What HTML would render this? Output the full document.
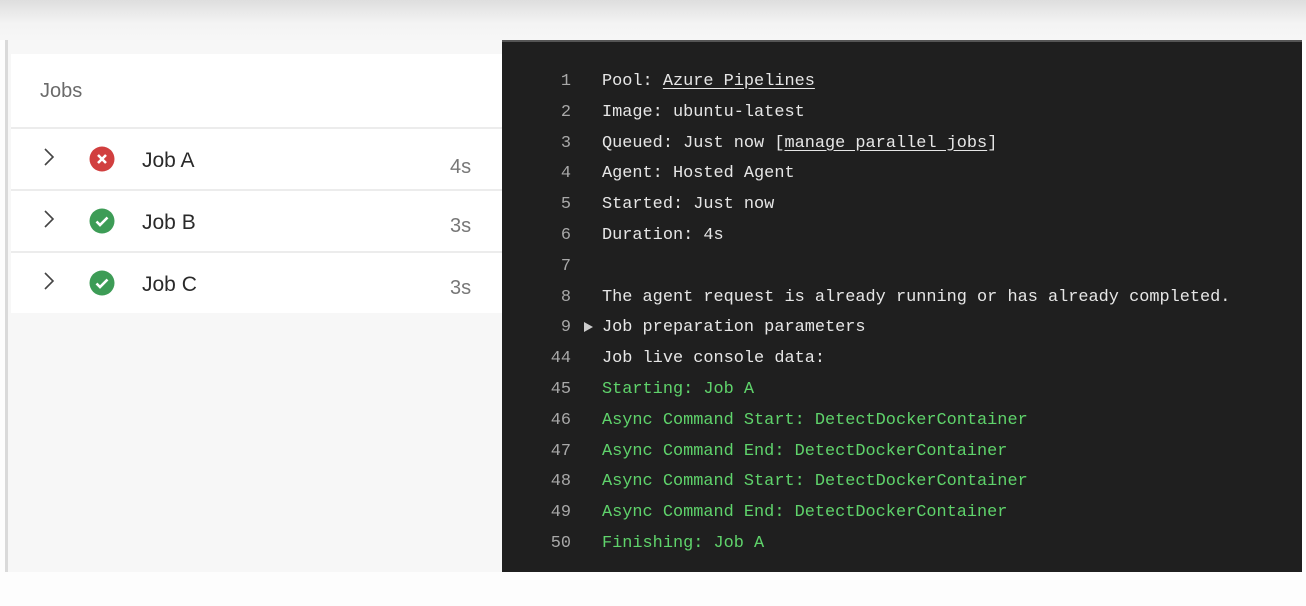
<!DOCTYPE html>
<html><head><style>
body{margin:0;width:1306px;height:606px;background:#fdfdfd;position:relative;overflow:hidden;font-family:"Liberation Sans",sans-serif}
.top{position:absolute;left:0;top:0;width:1306px;height:40px;background:linear-gradient(#dedede,#f4f4f4 60%,#f6f6f6)}
.left{position:absolute;left:5px;top:40px;width:497px;height:532px;background:#f7f7f7;border-left:3px solid #dadada;box-sizing:border-box}
.card{position:absolute;left:3px;top:14px;width:491px;height:259px;background:#fff}
.hdr{position:absolute;left:29px;top:26px;font-size:20px;color:#6a6a6a}
.sep{position:absolute;left:0;width:491px;height:2px;background:#ececec}
.row{position:absolute;left:0;width:491px;height:62px}
.chev{position:absolute;left:32px;top:18px}
.ic{position:absolute;left:78px;top:17px}
.nm{position:absolute;left:131px;top:20px;font-size:21px;color:#2a2a2a}
.dur{position:absolute;left:439px;top:24px;font-size:20px;color:#777}
.con{position:absolute;left:502px;top:40px;width:800px;height:532px;background:#1f1f1f;border-top:2px solid #555;box-sizing:border-box}
.l{position:absolute;left:0;width:800px;height:30.8px;font-family:"Liberation Mono",monospace;font-size:16.9px;line-height:30.8px;white-space:pre;color:#e6e6e6}
.n{position:absolute;right:731px;color:#a8a8a8}
.t{position:absolute;left:100px}
.g{color:#5fd36b}
u{text-underline-offset:3px}
</style></head><body>
<div class="top"></div>
<div class="left"><div class="card">
<div class="hdr">Jobs</div>
<div class="sep" style="top:73px"></div>
<div class="row" style="top:75px">
<svg class="chev" width="12" height="20" viewBox="0 0 12 20"><path d="M2 2l8 8-8 8" fill="none" stroke="#444" stroke-width="1.6"/></svg>
<svg class="ic" width="26" height="26" viewBox="0 0 26 26"><circle cx="13" cy="13" r="12.5" fill="#d13f3f"/><path d="M9 9l8 8M17 9l-8 8" stroke="#fff" stroke-width="2.6"/></svg>
<div class="nm">Job A</div><div class="dur" style="top:27px">4s</div></div>
<div class="sep" style="top:135px"></div>
<div class="row" style="top:137px">
<svg class="chev" width="12" height="20" viewBox="0 0 12 20"><path d="M2 2l8 8-8 8" fill="none" stroke="#444" stroke-width="1.6"/></svg>
<svg class="ic" width="26" height="26" viewBox="0 0 26 26"><circle cx="13" cy="13" r="12.5" fill="#3d9c56"/><path d="M7.5 13.5l3.5 3.5 7.5-7.5" fill="none" stroke="#fff" stroke-width="2.6"/></svg>
<div class="nm">Job B</div><div class="dur">3s</div></div>
<div class="sep" style="top:197px"></div>
<div class="row" style="top:199px">
<svg class="chev" width="12" height="20" viewBox="0 0 12 20"><path d="M2 2l8 8-8 8" fill="none" stroke="#444" stroke-width="1.6"/></svg>
<svg class="ic" width="26" height="26" viewBox="0 0 26 26"><circle cx="13" cy="13" r="12.5" fill="#3d9c56"/><path d="M7.5 13.5l3.5 3.5 7.5-7.5" fill="none" stroke="#fff" stroke-width="2.6"/></svg>
<div class="nm">Job C</div><div class="dur">3s</div></div>
</div></div>
<div class="con">
<div class="l" style="top:25px"><span class="n">1</span><span class="t">Pool: <u>Azure Pipelines</u></span></div>
<div class="l" style="top:55.8px"><span class="n">2</span><span class="t">Image: ubuntu-latest</span></div>
<div class="l" style="top:86.6px"><span class="n">3</span><span class="t">Queued: Just now [<u>manage parallel jobs</u>]</span></div>
<div class="l" style="top:117.4px"><span class="n">4</span><span class="t">Agent: Hosted Agent</span></div>
<div class="l" style="top:148.2px"><span class="n">5</span><span class="t">Started: Just now</span></div>
<div class="l" style="top:179px"><span class="n">6</span><span class="t">Duration: 4s</span></div>
<div class="l" style="top:209.8px"><span class="n">7</span></div>
<div class="l" style="top:240.6px"><span class="n">8</span><span class="t">The agent request is already running or has already completed.</span></div>
<div class="l" style="top:271.4px"><span class="n">9</span><svg style="position:absolute;left:82px;top:9px" width="9" height="10" viewBox="0 0 9 10"><path d="M0 0l9 5-9 5z" fill="#ccc"/></svg><span class="t">Job preparation parameters</span></div>
<div class="l" style="top:302.2px"><span class="n">44</span><span class="t">Job live console data:</span></div>
<div class="l" style="top:333px"><span class="n">45</span><span class="t g">Starting: Job A</span></div>
<div class="l" style="top:363.8px"><span class="n">46</span><span class="t g">Async Command Start: DetectDockerContainer</span></div>
<div class="l" style="top:394.6px"><span class="n">47</span><span class="t g">Async Command End: DetectDockerContainer</span></div>
<div class="l" style="top:425.4px"><span class="n">48</span><span class="t g">Async Command Start: DetectDockerContainer</span></div>
<div class="l" style="top:456.2px"><span class="n">49</span><span class="t g">Async Command End: DetectDockerContainer</span></div>
<div class="l" style="top:487px"><span class="n">50</span><span class="t g">Finishing: Job A</span></div>
</div>
</body></html>
